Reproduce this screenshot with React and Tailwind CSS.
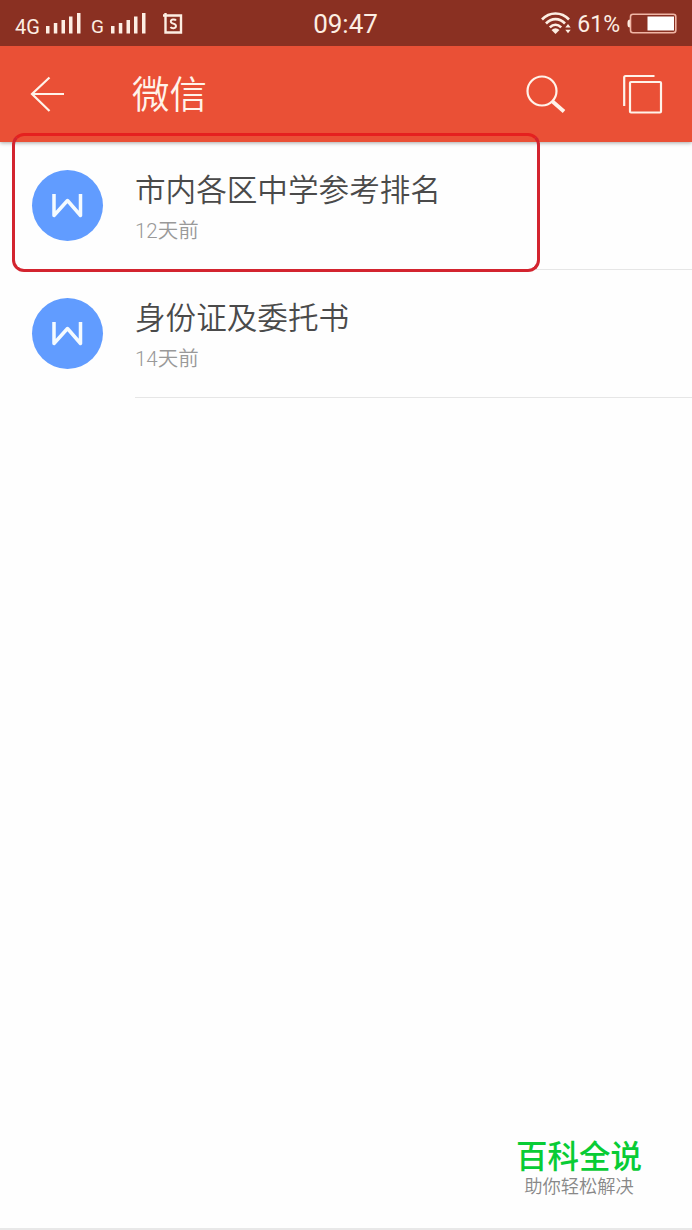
import React from "react";

const files = [
  { name: "市内各区中学参考排名", date: "12天前" },
  { name: "身份证及委托书", date: "14天前" },
];

function SignalBars() {
  return (
    <svg className="w-[35px] h-[21px]" viewBox="0 0 35 21" fill="#fdeee3">
      <rect x="0" y="13" width="3.5" height="7.5" />
      <rect x="7.8" y="10" width="3.5" height="10.5" />
      <rect x="15.5" y="7" width="3.5" height="13.5" />
      <rect x="23" y="3.5" width="3.5" height="17" />
      <rect x="31" y="0" width="3.5" height="20.5" />
    </svg>
  );
}

function ScreenshotIcon() {
  return (
    <svg className="w-5 h-[22px]" viewBox="0 0 20 22" fill="none" stroke="#fdeee3">
      <path d="M0 2.5H18V19.5H2.5V0" strokeWidth="2.4" />
      <path d="M13 7.5C12 6 7.8 6 7.8 8.6C7.8 11.4 13 10 13 13C13 15.8 8.5 15.7 7.5 14" strokeWidth="1.9" />
    </svg>
  );
}

function WifiIcon() {
  return (
    <svg className="w-[30px] h-[22px]" viewBox="0 0 30 22" fill="none" stroke="#fdeee3" strokeWidth="2.6">
      <path d="M1 7.5C8.5 -0.5 20.5 -0.5 28 7.5" />
      <path d="M5 11.5C10.5 5.7 18.5 5.7 24 11.5" />
      <path d="M8.8 15.4C12.3 12 16.7 12 20.2 15.4" />
      <path d="M10.5 18Q14.5 14.6 18.5 18L14.5 22Z" fill="#fdeee3" stroke="none" />
      <path d="M24.3 15.5L27 12L29.7 15.5ZM24.3 17.8H29.7L27 21.3Z" fill="#fdeee3" stroke="none" />
    </svg>
  );
}

function BatteryIcon() {
  return (
    <svg className="w-[50px] h-[21px]" viewBox="0 0 50 21" fill="none">
      <path d="M3.2 6.5C1 6.5 0.5 7.5 0.5 10.5C0.5 13.5 1 14.5 3.2 14.5Z" fill="#fdeee3" />
      <rect x="3.5" y="1.3" width="45.3" height="18.4" rx="2.5" stroke="#f0b5a5" strokeWidth="1.6" />
      <rect x="20.5" y="3.5" width="26.5" height="14" fill="#fff" />
    </svg>
  );
}

function StatusBar() {
  return (
    <div className="z-10 flex h-[46px] items-center justify-between bg-[#8a3022] px-[15px] text-[#fdeee3]">
      <div className="flex w-[225px] items-center pt-px">
        <span className="mt-[6px] w-[31px] text-[20px] leading-5">4G</span>
        <SignalBars />
        <span className="ml-[10px] mt-[6px] w-5 text-[19px] leading-5">G</span>
        <SignalBars />
        <span className="ml-[17px]">
          <ScreenshotIcon />
        </span>
      </div>
      <span className="mr-px mt-[2px] text-[26px] leading-none">09:47</span>
      <div className="flex w-[225px] items-center justify-end">
        <WifiIcon />
        <span className="ml-[6px] mr-[7px] mt-[3px] text-[23px] leading-none">61%</span>
        <BatteryIcon />
      </div>
    </div>
  );
}

function Header() {
  return (
    <header className="flex h-24 items-center bg-[#ea5036] pl-[30px] pr-[29px] text-[#fff3ea] shadow-[0_1px_4px_rgba(0,0,0,0.35)]">
      <svg className="w-[35px] h-9" viewBox="0 0 35 36" fill="none" stroke="currentColor" strokeWidth="2.2">
        <path d="M19.5 1.5L2 18L19.5 35M2 18H34" />
      </svg>
      <h1 className="ml-[67px] flex-1 pt-1 text-[37.5px] font-[350] leading-none">微信</h1>
      <svg className="mr-px w-10 h-10" viewBox="0 0 40 40" fill="none" stroke="currentColor">
        <circle cx="16" cy="17" r="14.5" strokeWidth="2.2" />
        <path d="M26 27L38 37.5" strokeWidth="3.8" />
      </svg>
      <svg className="ml-[56px] w-10 h-10" viewBox="0 0 40 40" fill="none" stroke="currentColor" strokeWidth="2.2">
        <path d="M1.2 32V3.5Q1.2 2 2.5 2H31.5" />
        <rect x="7" y="8" width="31" height="30.5" rx="1" />
      </svg>
    </header>
  );
}

function FileRow({ file }) {
  return (
    <li className="flex h-32 pl-8">
      <div className="mt-7 flex size-[71px] items-center justify-center rounded-full bg-[#619cff]">
        <svg className="w-[31px] h-6" viewBox="0 0 31 24" fill="none" stroke="#f5fbff" strokeWidth="3.5" strokeLinejoin="round">
          <path d="M2 0V21.5L15.5 6.5L28.5 21.5V0" />
        </svg>
      </div>
      <div className="ml-8 flex-1 border-b border-[#e6e6e6]">
        <div className="mt-[29px] text-[30.6px] font-[350] leading-10 text-[#4a4a4a]">{file.name}</div>
        <div className="mt-[5px] text-[20.5px] font-[350] leading-[30px] text-[#999]">{file.date}</div>
      </div>
    </li>
  );
}

export default function App() {
  return (
    <div className="relative flex h-[1230px] w-[692px] flex-col overflow-hidden bg-[#fefefe] font-[Roboto,'Noto_Sans_CJK_SC',sans-serif]">
      <StatusBar />
      <Header />
      <ul className="flex-1">
        {files.map((file) => (
          <FileRow key={file.name} file={file} />
        ))}
      </ul>
      <footer className="flex h-[91px] flex-col items-end border-b-2 border-[#e8e8e8]">
        <div className="mr-[50px] flex flex-col items-center">
          <span className="text-[31.5px] font-medium leading-[38px] text-[#08cc35]">百科全说</span>
          <span className="-mt-px text-[18.3px] font-[350] leading-[22px] text-[#888]">助你轻松解决</span>
        </div>
      </footer>

      {/* Highlight around the first file */}
      <div className="absolute left-3 top-[133px] h-[139px] w-[528px] rounded-xl border-3 border-[#d3242f] border-t-[#e5201f]" />
    </div>
  );
}
